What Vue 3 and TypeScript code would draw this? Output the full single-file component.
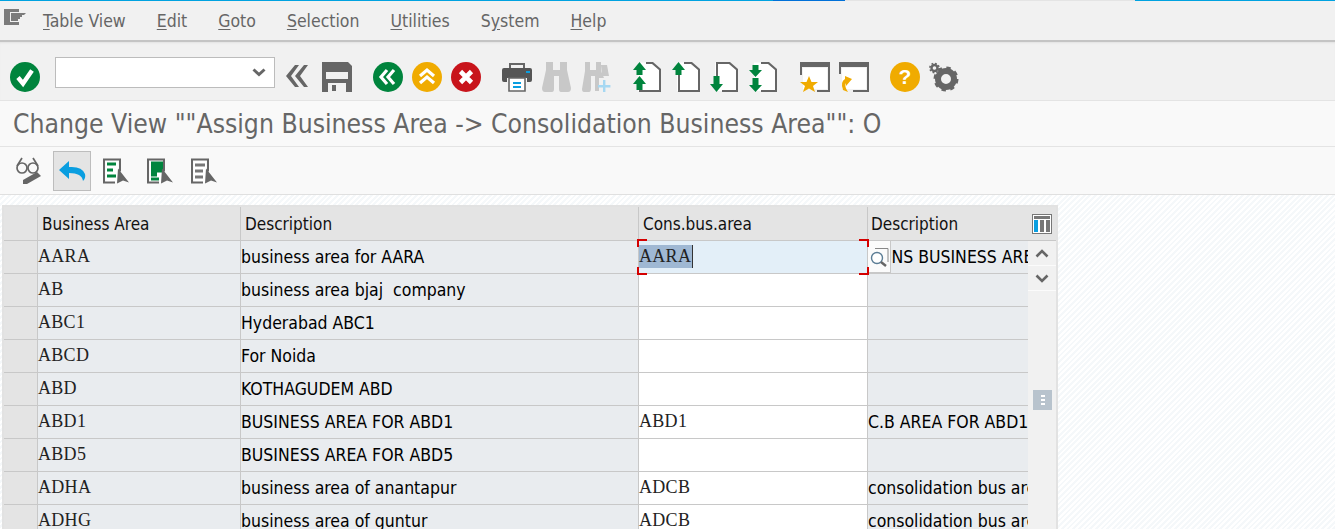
<script setup lang="ts">
const menus = [
  { pre: '', key: 'T', post: 'able View' },
  { pre: '', key: 'E', post: 'dit' },
  { pre: '', key: 'G', post: 'oto' },
  { pre: '', key: 'S', post: 'election' },
  { pre: '', key: 'U', post: 'tilities' },
  { pre: 'S', key: 'y', post: 'stem' },
  { pre: '', key: 'H', post: 'elp' }
]

const rows = [
  { area: 'AARA', desc: 'business area for AARA', cons: 'AARA', consDesc: 'CONS BUSINESS AREA' },
  { area: 'AB', desc: 'business area bjaj  company', cons: '', consDesc: '' },
  { area: 'ABC1', desc: 'Hyderabad ABC1', cons: '', consDesc: '' },
  { area: 'ABCD', desc: 'For Noida', cons: '', consDesc: '' },
  { area: 'ABD', desc: 'KOTHAGUDEM ABD', cons: '', consDesc: '' },
  { area: 'ABD1', desc: 'BUSINESS AREA FOR ABD1', cons: 'ABD1', consDesc: 'C.B AREA FOR ABD1' },
  { area: 'ABD5', desc: 'BUSINESS AREA FOR ABD5', cons: '', consDesc: '' },
  { area: 'ADHA', desc: 'business area of anantapur', cons: 'ADCB', consDesc: 'consolidation bus area' },
  { area: 'ADHG', desc: 'business area of guntur', cons: 'ADCB', consDesc: 'consolidation bus area' }
]
</script>

<template>
  <div class="page">
    <div class="strip">
      <i class="s1"></i><i class="s2"></i><i class="s3"></i><i class="s4"></i>
    </div>

    <nav class="menubar">
      <svg class="sysmenu" width="22" height="16" viewBox="0 0 22 16">
        <path d="M0 0H15V3H6V13H15V16H0Z" fill="#7b7b7b" />
        <path d="M7 4H22L20 6H18V8H16V10H14V12H7Z" fill="#7b7b7b" />
      </svg>
      <span v-for="m in menus" :key="m.post" class="menu">{{ m.pre }}<u>{{ m.key }}</u>{{ m.post }}</span>
    </nav>

    <div class="toolbar">
      <svg class="ic" viewBox="0 0 30 30">
        <circle cx="15" cy="15" r="15" fill="#00843d" />
        <path d="M8 15.5L13 21.5L22 8.5" fill="none" stroke="#fff" stroke-width="4.4" />
      </svg>
      <div class="okcode">
        <svg width="14" height="9" viewBox="0 0 14 9"><path d="M1.5 1.5L7 6.5L12.5 1.5" fill="none" stroke="#666" stroke-width="3" /></svg>
      </div>
      <svg class="chev" width="24" height="30" viewBox="0 0 24 30">
        <path d="M11 3H15L7 14L15 25H11L2 14Z M20 3H24L16 14L24 25H20L11 14Z" fill="#666" />
      </svg>
      <svg class="ic" viewBox="0 0 30 30">
        <path d="M0 0H26L30 4V30H0Z" fill="#666" />
        <rect x="4" y="10" width="22" height="7" fill="#f1f1f1" />
        <rect x="6" y="21" width="18" height="9" fill="#f1f1f1" />
        <rect x="10" y="23" width="4" height="6" fill="#666" />
      </svg>

      <div class="group g-nav">
        <svg class="ic" viewBox="0 0 30 30">
          <circle cx="15" cy="15" r="15" fill="#00843d" />
          <path d="M14 8L8 15L14 22 M21 8L15 15L21 22" fill="none" stroke="#fff" stroke-width="3.2" />
        </svg>
        <svg class="ic" viewBox="0 0 30 30">
          <circle cx="15" cy="15" r="15" fill="#f0ab00" />
          <path d="M8 14L15 8L22 14 M8 21L15 15L22 21" fill="none" stroke="#fff" stroke-width="3.2" />
        </svg>
        <svg class="ic" viewBox="0 0 30 30">
          <circle cx="15" cy="15" r="15" fill="#c8141b" />
          <path d="M9.5 9.5L20.5 20.5 M20.5 9.5L9.5 20.5" stroke="#fff" stroke-width="4.6" />
        </svg>
      </div>

      <div class="group g-print">
        <svg class="ic" viewBox="0 0 30 30">
          <path d="M7 1H23V7H21V3H9V7H7Z" fill="#666" />
          <path d="M2 6H28Q30 6 30 8V18Q30 20 28 20H25V16H5V20H2Q0 20 0 18V8Q0 6 2 6Z" fill="#555" />
          <rect x="24" y="9" width="4" height="2" fill="#0a9ee0" />
          <path d="M7 16H23V29H7Z" fill="#fff" stroke="#666" stroke-width="1.6" />
          <path d="M11 20H19V22H11Z M11 24H19V26H11Z" fill="#0a9ee0" />
        </svg>
        <svg class="ic" viewBox="0 0 30 30">
          <path d="M4 0H11V8H18V0H25L25 8L29 26Q29 30 26 30H19Q17 30 17 27V14H12V27Q12 30 10 30H3Q0 30 0 26L4 8Z" fill="#c8c8c8" />
        </svg>
        <svg class="ic" viewBox="0 0 30 30">
          <path d="M3 0H8V8H14V0H19V9L22 16H17V29H13V14H9V26Q9 30 7 30H2Q0 30 0 27L3 9Z" fill="#c8c8c8" />
          <path d="M19 3H25L27 14H20Z" fill="#c8c8c8" />
          <path d="M21 18H23.4V23H28.4V25.4H23.4V30H21V25.4H16V23H21Z" fill="#a6d8f2" />
        </svg>
      </div>

      <div class="group g-page">
        <svg class="ic" viewBox="0 0 30 30">
          <path d="M5 0.5H21L27.5 7V29H5Z" fill="#fff" />
          <path d="M13 0H20L28 7V30H6V28H26V8L19 2H13Z" fill="#666" />
          <path d="M6.500 0L13 8H9.500V13H3.500V8H0Z M6.500 14L13 22H9.500V28H3.500V22H0Z" fill="#00843d" />
        </svg>
        <svg class="ic" viewBox="0 0 30 30">
          <path d="M5 0.5H21L27.5 7V29H5Z" fill="#fff" />
          <path d="M12 0H20L28 7V30H6V13H8V28H26V8L19 2H12Z" fill="#666" />
          <path d="M6.500 0L13 8H9.500V13H3.500V8H0Z" fill="#00843d" />
        </svg>
        <svg class="ic" viewBox="0 0 30 30">
          <path d="M5 0.5H21L27.5 7V29H5Z" fill="#fff" />
          <path d="M6 14V0H20L28 7V30H12V28H26V8L19 2H8V14Z" fill="#666" />
          <path d="M3.500 14H9.500V22H13L6.500 30L0 22H3.500Z" fill="#00843d" />
        </svg>
        <svg class="ic" viewBox="0 0 30 30">
          <path d="M5 0.5H21L27.5 7V29H5Z" fill="#fff" />
          <path d="M12 0H20L28 7V30H12V28H26V8L19 2H12Z" fill="#666" />
          <path d="M3.500 3H9.500V8H13L6.500 15L0 8H3.500Z M3.500 16H9.500V23H13L6.500 30L0 23H3.500Z" fill="#00843d" />
        </svg>
      </div>

      <div class="group g-win">
        <svg class="ic" viewBox="0 0 30 30">
          <path d="M3 6H27V27H3Z" fill="#fff" />
          <path d="M0 0H30V30H17V28H28V5H2V13H0Z" fill="#666" />
          <path d="M9 14L11.5 20H18L13 24L15 30L9 26.5L3 30L5 24L0 20H6.5Z" fill="#f0ab00" />
        </svg>
        <svg class="ic" viewBox="0 0 30 30">
          <path d="M3 6H27V27H3Z" fill="#fff" />
          <path d="M0 0H30V30H14V28H28V5H2V12H0Z" fill="#666" />
          <path d="M4 28Q1 20 6 17L6 14L13 17L7 24L7 21Q5 24 9 30Z" fill="#f0ab00" />
        </svg>
      </div>

      <div class="group g-help">
        <svg class="ic" viewBox="0 0 30 30">
          <circle cx="15" cy="15" r="15" fill="#f0ab00" />
          <text x="15" y="22" text-anchor="middle" class="qm">?</text>
        </svg>
        <svg class="ic" viewBox="0 0 30 30">
          <circle cx="17" cy="17" r="8" fill="none" stroke="#666" stroke-width="6" />
          <circle cx="17" cy="17" r="11" fill="none" stroke="#666" stroke-width="3" stroke-dasharray="4.3 4.34" />
          <circle cx="5.5" cy="6" r="3" fill="none" stroke="#666" stroke-width="2.4" />
          <circle cx="5.5" cy="6" r="4.6" fill="none" stroke="#666" stroke-width="1.6" stroke-dasharray="1.8 1.8" />
        </svg>
      </div>
    </div>

    <h1 class="title">Change View ""Assign Business Area -&gt; Consolidation Business Area"": O</h1>

    <div class="apptools">
      <svg class="ic26 glasses" viewBox="0 0 26 28">
        <path d="M7 1L2 9 M18 1L23 9" fill="none" stroke="#666" stroke-width="1.700" />
        <circle cx="7" cy="11" r="5" fill="none" stroke="#666" stroke-width="1.700" />
        <circle cx="18" cy="11" r="5" fill="none" stroke="#666" stroke-width="1.700" />
        <path d="M8 27V23L22 15L26 19L12 27Z" fill="#666" />
      </svg>
      <button class="undo" type="button">
        <svg width="27" height="20" viewBox="0 0 27 20">
          <path d="M10 0V6Q23 5 26 13Q27 17 24 20Q23 12 10 12V18L0 9Z" fill="#0a9ee0" />
        </svg>
      </button>
      <svg class="ic26" viewBox="0 0 26 25">
        <path d="M3 3H15V24H3Z" fill="#fff" />
        <path d="M4 4H13V7H4Z M4 10H10V13H4Z M4 16H13V19H4Z" fill="#00843d" />
        <path d="M0 0H18V13H16V2H2V23H12V25H0Z" fill="#666" />
        <path d="M15 10L26 24L20 22L14 25Z" fill="#666" />
      </svg>
      <svg class="ic26" viewBox="0 0 26 25">
        <path d="M3 3H15V24H3Z" fill="#fff" />
        <path d="M4 3H16V14H10V18H4Z M4 19H12V22H4Z" fill="#00843d" />
        <path d="M0 0H18V13H16V2H2V23H12V25H0Z" fill="#666" />
        <path d="M15 10L26 24L20 22L14 25Z" fill="#666" />
      </svg>
      <svg class="ic26" viewBox="0 0 26 25">
        <path d="M3 3H15V24H3Z" fill="#fff" />
        <path d="M4 5H14V8H4Z M4 11H12V14H4Z M4 17H12V20H4Z" fill="#777" />
        <path d="M0 0H18V13H16V2H2V23H12V25H0Z" fill="#666" />
        <path d="M15 10L26 24L20 22L14 25Z" fill="#666" />
      </svg>
    </div>

    <main class="content">
      <section class="table">
        <header class="cols head">
          <div class="hc"></div>
          <div class="hc">Business Area</div>
          <div class="hc">Description</div>
          <div class="hc">Cons.bus.area</div>
          <div class="hc last">
            Description
            <svg width="20" height="20" viewBox="0 0 20 20">
              <rect x="0.500" y="0.500" width="19" height="19" fill="#fff" stroke="#777" />
              <rect x="2" y="2" width="16" height="3" fill="#777" />
              <rect x="2" y="6" width="4" height="12" fill="#0a9ee0" />
              <rect x="8" y="6" width="4" height="12" fill="#777" />
              <rect x="14" y="6" width="4" height="12" fill="#777" />
            </svg>
          </div>
        </header>

        <div class="body">
          <div class="rows">
            <div v-for="(r, i) in rows" :key="r.area" class="cols row">
              <div class="c mark"></div>
              <div class="c ro mono">{{ r.area }}</div>
              <div class="c ro txt">{{ r.desc }}</div>
              <div class="c edit mono" :class="{ active: i === 0 }">
                <template v-if="i === 0">
                  <span class="sel">{{ r.cons }}</span>
                  <b class="br tl"></b><b class="br tr"></b><b class="br bl"></b><b class="br br2"></b>
                </template>
                <template v-else>{{ r.cons }}</template>
              </div>
              <div class="c ro txt clip">
                {{ r.consDesc }}
                <span v-if="i === 0" class="f4">
                  <svg width="20" height="20" viewBox="0 0 20 20">
                    <path d="M6 1.500H19V15" fill="none" stroke="#888" />
                    <circle cx="8" cy="11" r="5.500" fill="#fff" stroke="#5b7d95" stroke-width="1.400" />
                    <path d="M12 15L17 19" stroke="#666" stroke-width="2.400" />
                  </svg>
                </span>
              </div>
            </div>
          </div>
          <aside class="scroll">
            <div class="sbtn">
              <svg width="14" height="9" viewBox="0 0 14 9"><path d="M1.500 7.500L7 2L12.500 7.500" fill="none" stroke="#666" stroke-width="2.600" /></svg>
            </div>
            <div class="sbtn">
              <svg width="14" height="9" viewBox="0 0 14 9"><path d="M1.500 1.500L7 7L12.500 1.500" fill="none" stroke="#666" stroke-width="2.600" /></svg>
            </div>
            <div class="thumb"><i></i><i></i><i></i></div>
          </aside>
        </div>
      </section>
    </main>
  </div>
</template>

<style>
html,
body {
  margin: 0;
  overflow: hidden;
}
</style>

<style scoped>
.page {
  width: 1335px;
  height: 529px;
  overflow: hidden;
  display: flex;
  flex-direction: column;
  font-family: 'DejaVu Sans', sans-serif;
  font-stretch: condensed;
  background: #fff;
}
.strip {
  height: 1px;
  display: flex;
  flex: none;
}
.strip i {
  display: block;
}
.s1 {
  width: 773px;
  background: #00a2e0;
}
.s2 {
  width: 72px;
  background: #0070d8;
}
.s3 {
  width: 290px;
  background: #e4e4e4;
}
.s4 {
  flex: 1;
  background: #00a2e0;
}
.menubar {
  height: 39px;
  flex: none;
  box-sizing: border-box;
  display: flex;
  align-items: center;
  gap: 31px;
  padding-left: 4px;
  background: #f1f1f1;
  color: #666;
  font-size: 17.500px;
}
.sysmenu {
  margin-right: -14px;
  margin-top: -7px;
}
.menu u {
  text-underline-offset: 2px;
}
.toolbar {
  height: 60px;
  flex: none;
  box-sizing: border-box;
  display: flex;
  align-items: flex-start;
  padding: 20px 0 0 10px;
  background: #f1f1f1;
  border-top: 2px solid #c4c4c4;
  box-shadow: inset 0 2px 2px -1px #e2e2e2;
}
.ic {
  width: 30px;
  height: 30px;
  flex: none;
  display: block;
}
.okcode {
  width: 220px;
  height: 31px;
  flex: none;
  box-sizing: border-box;
  margin: -5px 0 0 15px;
  padding-right: 8px;
  display: flex;
  align-items: center;
  justify-content: flex-end;
  background: #fff;
  border: 1px solid #bcbcbc;
}
.chev {
  margin: 0 14px 0 9px;
  flex: none;
}
.group {
  display: flex;
  gap: 9px;
  margin-left: 21px;
}
.g-print {
  gap: 10px;
}
.g-page {
  gap: 8.500px;
}
.qm {
  font-family: 'Liberation Sans', sans-serif;
  font-weight: 700;
  font-size: 21px;
  fill: #fff;
}
.title {
  margin: 0;
  height: 47px;
  flex: none;
  box-sizing: border-box;
  padding-left: 13px;
  background: #f9f9f9;
  border-top: 1px solid #e4e4e4;
  border-bottom: 1px solid #e4e4e4;
  color: #666;
  font-size: 26.300px;
  font-weight: 400;
  line-height: 47px;
  white-space: nowrap;
}
.apptools {
  height: 48px;
  flex: none;
  box-sizing: border-box;
  display: flex;
  align-items: center;
  padding-left: 15px;
  background: #f9f9f9;
  border-bottom: 1px solid #e0e0e0;
}
.ic26 {
  width: 26px;
  height: 26px;
  flex: none;
  margin-right: 18px;
}
.glasses {
  height: 28px;
}
.undo {
  width: 38px;
  height: 40px;
  flex: none;
  margin: 0 12px 0 -6px;
  padding: 0;
  display: flex;
  align-items: center;
  justify-content: center;
  background: #e4e4e4;
  border: 1px solid #bdbdbd;
}
.content {
  flex: 1;
  min-height: 0;
  padding: 10px 0 0 2px;
  background: repeating-linear-gradient(135deg, #fff 0 2px, #f5f8fa 2px 4px);
}
.table {
  width: 1056px;
  box-sizing: border-box;
  border: 2px solid #e2e2e2;
  border-bottom: 0;
  background: #fff;
}
.cols {
  display: grid;
  grid-template-columns: 34px 203px 398px 229px 1fr;
}
.head {
  height: 34px;
  box-sizing: border-box;
  background: #e4e4e4;
  border-bottom: 1px solid #c8c8c8;
  color: #111;
  font-size: 17px;
  line-height: 32px;
}
.hc {
  height: 33px;
  box-sizing: border-box;
  padding: 1px 0 0 4px;
  border-right: 1px solid #c8c8c8;
  overflow: hidden;
  white-space: nowrap;
}
.hc:first-child {
  padding: 0;
}
.last {
  padding: 1px 4px 0 3px;
  border-right: 0;
  display: flex;
  align-items: flex-start;
  justify-content: space-between;
}
.last svg {
  margin-top: 6px;
}
.body {
  display: flex;
}
.rows {
  width: 1024px;
  flex: none;
}
.row {
  height: 33px;
  box-sizing: border-box;
  border-bottom: 1px solid #c8c8c8;
  font-size: 17.500px;
  color: #000;
  line-height: 31px;
}
.c {
  position: relative;
  height: 32px;
  box-sizing: border-box;
  border-right: 1px solid #c8c8c8;
  white-space: pre;
}
.txt {
  padding-top: 1px;
}
.mark {
  background: #e4e4e4;
}
.ro {
  background: #e9ecef;
}
.mono {
  font-family: 'Liberation Serif', serif;
  font-size: 18px;
  letter-spacing: 0.300px;
  color: #222;
  line-height: 31px;
}
.edit {
  background: #fff;
}
.active {
  background: #e3eff8;
}
.sel {
  display: inline-block;
  height: 23px;
  line-height: 23px;
  margin-top: 4px;
  padding-right: 1px;
  background: #9fb8d3;
  border-right: 1px solid #333;
  vertical-align: top;
}
.br {
  position: absolute;
  z-index: 2;
  width: 8px;
  height: 6px;
  border: 0 solid #d40000;
}
.tl {
  left: -2px;
  top: -2px;
  border-width: 2px 0 0 2px;
}
.tr {
  right: -2px;
  top: -2px;
  border-width: 2px 2px 0 0;
}
.bl {
  left: -2px;
  bottom: -2px;
  border-width: 0 0 2px 2px;
}
.br2 {
  right: -2px;
  bottom: -2px;
  border-width: 0 2px 2px 0;
}
.clip {
  overflow: hidden;
  border-right: 0;
}
.f4 {
  position: absolute;
  left: 0;
  top: 0;
  width: 23px;
  height: 32px;
  box-sizing: border-box;
  display: flex;
  align-items: center;
  justify-content: center;
  background: #fbfbfb;
  border: 1px solid #c8c8c8;
  border-width: 0 1px 1px 0;
}
.scroll {
  position: relative;
  flex: 1;
  background: #f1f1f1;
}
.sbtn {
  height: 25px;
  box-sizing: border-box;
  display: flex;
  align-items: center;
  justify-content: center;
  border-bottom: 1px solid #fbfbfb;
}
.thumb {
  position: absolute;
  left: 5px;
  top: 149px;
  width: 19px;
  height: 20px;
  display: flex;
  flex-direction: column;
  align-items: center;
  justify-content: center;
  gap: 2px;
  background: #b8c3cd;
}
.thumb i {
  width: 4px;
  height: 2px;
  background: #fff;
}
</style>
